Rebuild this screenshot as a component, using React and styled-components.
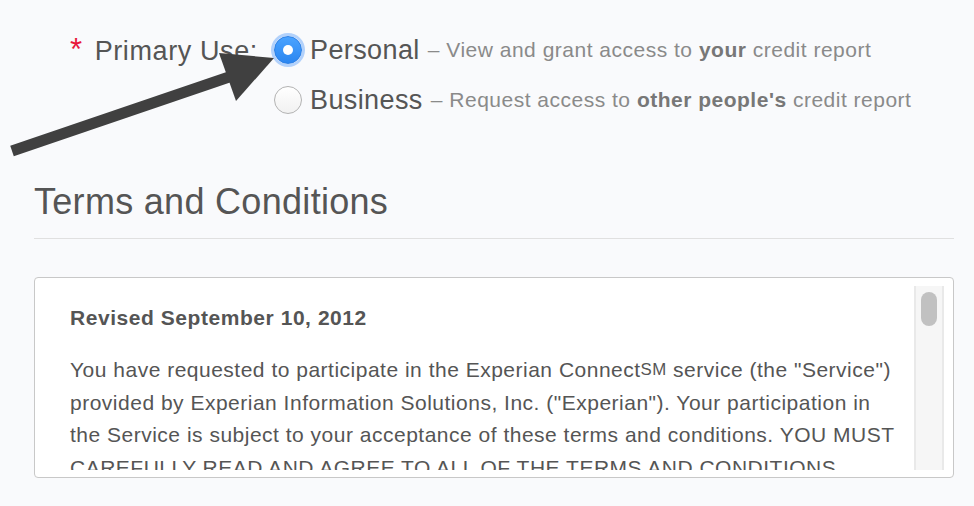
import React from 'react';
import styled, { createGlobalStyle } from 'styled-components';

const GlobalStyle = createGlobalStyle`
    html, body {
        margin:0;
        padding:0;
        background:#f9fafc;
    }
    body {
        font-family:"Liberation Sans", Arial, sans-serif;
        color:#555;
    }
`;

const Page = styled.div`
    position:relative;
    width:974px;
    height:506px;
    overflow:hidden;
    padding:28px 20px 0 34px;
    box-sizing:border-box;
`;

const UseRow = styled.div`
    display:flex;
    align-items:flex-start;
    padding-left:36px;
`;

const Label = styled.div`
    font-size:27px;
    letter-spacing:0.6px;
    line-height:44px;
    color:#555;
    width:202px;
    white-space:nowrap;
`;

const Star = styled.span`
    color:#e8173b;
    font-size:31px;
    margin-right:12px;
`;

const Options = styled.div`
    display:flex;
    flex-direction:column;
    gap:6px;
`;

const Option = styled.label`
    display:flex;
    align-items:center;
    height:44px;
    white-space:nowrap;
`;

const Radio = styled.span`
    width:28px;
    height:28px;
    border-radius:50%;
    box-sizing:border-box;
    margin:0 8px 0 2px;
    display:flex;
    align-items:center;
    justify-content:center;
    flex-shrink:0;
    ${({ checked }) => checked ? `
        background:linear-gradient(#4aa3ff, #2b86f0);
        border:1px solid #2a7fe6;
        box-shadow:0 0 0 3px rgba(90,160,250,0.45);
    ` : `
        background:linear-gradient(#fff, #f1f1f1);
        border:1px solid #b3b3b3;
    `}
`;

const Dot = styled.span`
    width:10px;
    height:10px;
    border-radius:50%;
    background:#fff;
`;

const OptionName = styled.span`
    font-size:27px;
    letter-spacing:0.4px;
    color:#555;
    margin-right:8px;
`;

const OptionNote = styled.span`
    font-size:21px;
    letter-spacing:0.5px;
    color:#8a8a8a;
    b {
        color:#777;
    }
`;

const Heading = styled.h2`
    margin:56px 0 0 0;
    font-weight:normal;
    font-size:36px;
    letter-spacing:0.3px;
    line-height:48px;
    color:#555;
    padding-bottom:12px;
    border-bottom:1px solid #e0e0e0;
`;

const TermsBox = styled.div`
    display:flex;
    margin-top:38px;
    background:#fff;
    border:1px solid #c8c8c8;
    border-radius:4px;
    padding:8px 9px 7px 9px;
`;

const TermsText = styled.div`
    flex:1;
    height:184px;
    overflow:hidden;
    padding:20px 0 0 26px;
    box-sizing:border-box;
    color:#555;
`;

// stands in for the native scrollbar of the terms pane
const ScrollTrack = styled.div`
    width:30px;
    box-sizing:border-box;
    background:#f6f6f6;
    border-left:2px solid #e9e9e9;
    border-right:2px solid #e9e9e9;
    padding:6px 5px;
`;

const ScrollThumb = styled.div`
    height:34px;
    border-radius:8px;
    background:#c1c1c1;
`;

const Revised = styled.h4`
    margin:0 0 24px 0;
    font-size:21px;
    letter-spacing:0.55px;
    line-height:24px;
    font-weight:bold;
`;

const Para = styled.p`
    margin:0 0 20px 0;
    font-size:21px;
    letter-spacing:0.5px;
    line-height:32.5px;
    white-space:nowrap;
    color:#555;
`;

const Sm = styled.span`
    font-size:0.8em;
    vertical-align:2px;
`;

const Arrow = styled.svg`
    position:absolute;
    left:0;
    top:0;
    pointer-events:none;
`;

const OPTIONS = [
    { name: 'Personal', pre: 'View and grant access to ', bold: 'your', post: ' credit report', checked: true },
    { name: 'Business', pre: 'Request access to ', bold: "other people's", post: ' credit report', checked: false },
];

export default function App() {
    return (
        <Page>
            <GlobalStyle />
            <UseRow>
                <Label><Star>*</Star>Primary Use:</Label>
                <Options>
                    {OPTIONS.map(o => (
                        <Option key={o.name}>
                            <Radio checked={o.checked}>{o.checked && <Dot />}</Radio>
                            <OptionName>{o.name}</OptionName>
                            <OptionNote>– {o.pre}<b>{o.bold}</b>{o.post}</OptionNote>
                        </Option>
                    ))}
                </Options>
            </UseRow>

            <Heading>Terms and Conditions</Heading>

            <TermsBox>
                <TermsText>
                    <Revised>Revised September 10, 2012</Revised>
                    <Para>
                        You have requested to participate in the Experian Connect<Sm>SM</Sm> service (the "Service")<br />
                        provided by Experian Information Solutions, Inc. ("Experian"). Your participation in<br />
                        the Service is subject to your acceptance of these terms and conditions. YOU MUST<br />
                        CAREFULLY READ AND AGREE TO ALL OF THE TERMS AND CONDITIONS<br />
                        BEFORE YOU CAN USE THE SERVICE.
                    </Para>
                </TermsText>
                <ScrollTrack>
                    <ScrollThumb />
                </ScrollTrack>
            </TermsBox>

            <Arrow width="300" height="170" viewBox="0 0 300 170">
                <line x1="12" y1="151" x2="232" y2="76" stroke="#404040" strokeWidth="11" />
                <polygon points="219,53 274,58 236,101" fill="#404040" />
            </Arrow>
        </Page>
    );
}
